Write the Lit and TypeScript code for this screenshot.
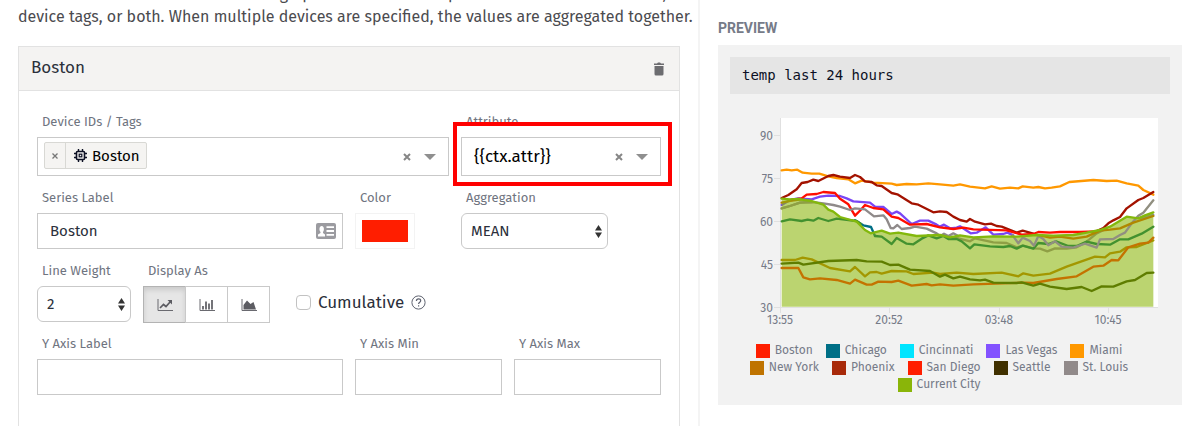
import { LitElement, html, svg, css } from "lit";
import { customElement, state } from "lit/decorators.js";

type Series = { name: string; color: string };
type Line = { color: string; points: string };

const LEGEND: Series[] = [
  { name: "Boston", color: "#ff1e00" },
  { name: "Chicago", color: "#006f86" },
  { name: "Cincinnati", color: "#00e5ff" },
  { name: "Las Vegas", color: "#8352ff" },
  { name: "Miami", color: "#ff9800" },
  { name: "New York", color: "#bf7300" },
  { name: "Phoenix", color: "#a82a0a" },
  { name: "San Diego", color: "#ff1e00" },
  { name: "Seattle", color: "#403000" },
  { name: "St. Louis", color: "#918a8a" },
  { name: "Current City", color: "#8ab509" },
];

const CURRENT =
  "125,266 150,268 175,267 215,273 250,284 265,299 280,305 300,321 350,335 375,360 392,370 425,362 450,371 475,368 530,378 600,375 630,382 660,376 700,382 760,379 830,380 890,375 940,377 1000,375 1040,368 1080,360 1110,350 1160,320 1195,325 1215,316 1240,307";

// Lines drawn beneath the Current City area.
const BACK: Line[] = [
  { color: "#006f86", points: "345,331 370,346 393,351 405,378" },
  {
    color: "#7a45f5",
    points:
      "125,285 150,270 175,265 215,268 240,260 265,257 300,258 320,265 340,274 390,278 405,290 430,291 455,312 470,305 480,310 515,342 540,332 565,332 590,344 600,350 612,344 630,355 650,353 660,349 692,370 710,368 737,352 760,374 790,372 802,368 820,376",
  },
  { color: "#8a80d0", points: "1200,325 1240,315" },
  {
    color: "#ff9800",
    points:
      "125,181 140,179 155,181 172,179 188,188 215,191 238,191 265,199 290,204 325,208 345,220 365,212 400,218 455,221 470,225 500,222 530,223 565,220 600,223 640,227 660,223 690,230 735,235 755,229 780,236 810,233 835,235 848,229 880,233 895,231 915,235 935,233 960,229 988,216 1060,210 1100,213 1130,212 1160,220 1195,227 1210,240 1240,254",
  },
  { color: "#bf7300", points: "125,278 155,272 185,268" },
  {
    color: "#a31200",
    points:
      "125,264 145,255 170,238 185,219 203,216 220,209 235,213 265,198 280,195 300,200 330,204 345,195 360,201 375,214 395,216 410,226 425,228 455,249 472,253 515,280 535,284 580,307 600,304 620,306 640,320 660,330 680,335 690,327 705,335 735,343 753,341 770,348 785,350 830,368 848,362 880,371",
  },
  {
    color: "#ff0d00",
    points:
      "155,270 185,265 200,254 230,252 250,246 285,249 300,266 325,283 345,317 362,300 375,285 400,294 430,298 455,320 475,324 510,344 560,342 600,352 640,357 670,353 700,358 800,361 845,374 880,372 895,366 930,368 960,366 1020,366 1070,364",
  },
  { color: "#a31200", points: "1060,368 1090,354 1105,340 1120,331 1140,321 1160,295 1195,270 1210,264 1240,246" },
  {
    color: "#8f8a8a",
    points:
      "125,295 150,288 180,278 215,276 250,280 280,285 300,290 330,300 345,295 375,298 402,319 430,316 440,328 452,354 460,355 472,345 485,357 510,354 525,350 560,356 590,370 600,378 612,371 625,378 640,370 655,378",
  },
];

// Lines that read through the Current City area.
const FRONT: Line[] = [
  { color: "#8f9f45", points: "125,295 150,288 180,278 215,276" },
  {
    color: "#8f9f45",
    points:
      "635,380 690,394 705,385 760,397 800,399 830,412 850,407 880,415 900,416 922,424 945,415 980,416 1010,412 1040,395 1070,370 1100,355",
  },
  {
    color: "#43912f",
    points:
      "125,334 150,328 185,333 203,329 220,332 235,324 265,333 290,326 350,333 362,341",
  },
  {
    color: "#43912f",
    points:
      "405,378 425,380 455,402 470,384 500,401 520,403 545,386 565,376 590,385 610,378 625,387 650,387 665,394 690,415 703,403 750,409 790,411 810,408 830,416 848,407 880,416 895,399 925,402 948,394 985,408 1010,408 1040,395 1070,402 1110,404 1140,388 1165,388 1205,371 1240,350",
  },
  {
    color: "#918f80",
    points:
      "818,376 835,400 848,383 870,393 882,407 895,378 910,387 925,406 945,394 965,410 1000,413 1035,401 1070,413 1080,388 1120,387 1140,375 1155,368 1175,340 1195,317 1210,308 1240,271",
  },
  { color: "#b08700", points: "890,374 930,383 960,380 1000,386 1040,380 1080,362 1110,359 1140,355 1180,338 1240,318" },
  {
    color: "#a39700",
    points:
      "125,450 165,450 188,443 215,448 270,474 330,484 345,471 375,499 390,487 410,486 425,491 455,483 500,484 520,492 580,488 600,492 650,488 700,492 785,488 835,499 850,490 880,497 930,491 980,470 1065,440 1095,442 1110,430 1140,425 1160,412 1190,411 1240,391",
  },
  {
    color: "#c47300",
    points:
      "125,474 175,474 190,502 210,508 240,505 290,510 330,521 345,509 380,524 395,524 415,515 455,516 475,512 515,527 560,522 575,526 600,523 640,527 700,523 850,518 880,519 950,507 1010,499 1060,470 1090,467 1115,450 1135,451 1165,412 1200,401 1225,398 1240,383",
  },
  {
    color: "#5f7d00",
    points:
      "125,461 175,458 190,464 265,453 350,450 380,454 425,455 450,465 475,464 510,479 570,483 600,500 615,494 640,505 660,500 690,508 720,511 735,509 760,518 830,519 845,517 880,527 900,521 930,530 980,537 1025,531 1055,543 1085,529 1120,530 1160,514 1185,510 1220,489 1240,488",
  },
];

const Y_TICKS = [
  { label: "90", y: 25 },
  { label: "75", y: 68 },
  { label: "60", y: 111 },
  { label: "45", y: 154 },
  { label: "30", y: 197 },
];

const X_TICKS = [
  { label: "13:55", x: 40 },
  { label: "20:52", x: 149 },
  { label: "03:48", x: 259 },
  { label: "10:45", x: 368 },
];

@customElement("temp-chart")
export class TempChart extends LitElement {
  static styles = css`
    :host {
      display: block;
    }
    .plot {
      display: block;
      width: 100%;
      height: auto;
    }
    .tick {
      font: 12px "Fira Sans", "Noto Sans", sans-serif;
      fill: #767b88;
    }
    .axis {
      stroke: #e0e0e0;
    }
    .line {
      fill: none;
      stroke-width: 7;
      stroke-linejoin: round;
      stroke-linecap: round;
    }
    .legend {
      display: flex;
      flex-wrap: wrap;
      justify-content: center;
      column-gap: 13px;
      margin: 0;
      padding: 0 32px 0 10px;
      list-style: none;
      font: 12px/17px "Fira Sans", "Noto Sans", sans-serif;
      color: #767b88;
    }
    .entry {
      display: flex;
      align-items: center;
      gap: 5px;
    }
    .swatch {
      width: 14px;
      height: 14px;
    }
  `;

  private line = (l: Line) =>
    svg`<polyline class="line" stroke=${l.color} points=${l.points}></polyline>`;

  render() {
    return html`
      <svg class="plot" viewBox="-10 -16 440 248" role="img" aria-label="temp last 24 hours">
        <rect x="40" y="8" width="378" height="189" fill="#fff"></rect>
        <path class="axis" d="M40.5 8V197M40 197.5H418"></path>
        ${Y_TICKS.map(
          (t) => svg`<path class="axis" d="M34 ${t.y + 0.5}h6"></path>
            <text class="tick" text-anchor="end" x="33" y=${t.y + 5}>${t.label}</text>`
        )}
        ${X_TICKS.map(
          (t) => svg`<path class="axis" d="M${t.x + 0.5} 197v6"></path>
            <text class="tick" text-anchor="middle" x=${t.x} y="214">${t.label}</text>`
        )}
        <g transform="scale(.33333)">
          ${BACK.map(this.line)}
          <polygon fill="#8ab509" fill-opacity=".58" points="${CURRENT} 1240,590 125,590"></polygon>
          ${FRONT.map(this.line)}
          ${this.line({ color: "#83b80c", points: CURRENT })}
        </g>
      </svg>
      <ul class="legend">
        ${LEGEND.map(
          (s) => html`<li class="entry">
            <span class="swatch" style="background:${s.color}"></span>${s.name}
          </li>`
        )}
      </ul>
    `;
  }
}

const clearIcon = html`<svg width="8" height="8" viewBox="0 0 8 8">
  <path d="M1 1l6 6M7 1l-6 6" stroke="#868686" stroke-width="2"></path>
</svg>`;
const caretIcon = html`<svg width="12" height="6" viewBox="0 0 12 6">
  <path d="M0 0h12L6 6z" fill="#8f8f8f"></path>
</svg>`;
const sortIcon = html`<svg class="sort" width="7" height="13" viewBox="0 0 7 13">
  <path d="M0 5.5L3.5 0 7 5.500zM0 7.500L3.500 13 7 7.500z" fill="#333"></path>
</svg>`;
const chartAxes = svg`<path d="M1 0v11.500h15" fill="none" stroke="#6a6a70"></path>`;

@customElement("app-root")
export class AppRoot extends LitElement {
  @state() private display = "line";

  static styles = css`
    :host {
      display: grid;
      grid-template-columns: 7fr 5fr;
      height: 100vh;
      overflow: hidden;
      background: #fff;
      color: #2b303b;
      font-family: "Fira Sans", "Noto Sans", sans-serif;
    }
    * {
      box-sizing: border-box;
    }
    button,
    input,
    select {
      font: inherit;
      color: inherit;
      margin: 0;
    }
    svg {
      display: block;
      flex: none;
    }
    .editor {
      display: flex;
      flex-direction: column;
      min-width: 0;
      padding: 0 18px;
      border-right: 2px solid #f4f4f4;
    }
    .intro {
      margin: -18px 0 18px;
      font-size: 16px;
      line-height: 23px;
      color: #4b4b4f;
      white-space: nowrap;
    }
    .card {
      flex: 1;
      border: solid #e2e2e2;
      border-width: 1px 1px 0;
    }
    .card-head {
      display: flex;
      align-items: center;
      justify-content: space-between;
      height: 44px;
      padding: 0 14px 0 12px;
      background: #f4f3f2;
      border-bottom: 1px solid #e2e2e2;
    }
    .card-title {
      margin: 0;
      font-size: 17px;
      line-height: 24px;
      padding-bottom: 2px;
      font-weight: 400;
    }
    .plain {
      display: flex;
      align-items: center;
      justify-content: center;
      padding: 0;
      border: 0;
      background: none;
    }
    .form {
      display: grid;
      grid-template-columns: repeat(12, 1fr);
      gap: 11px 12px;
      padding: 20px 18px;
    }
    .field {
      display: flex;
      flex-direction: column;
      align-items: stretch;
      min-width: 0;
    }
    .s2 { grid-column: span 2; }
    .s3 { grid-column: span 3; }
    .s4 { grid-column: span 4; }
    .s6 { grid-column: span 6; }
    .s8 { grid-column: span 8; }
    .first { grid-column: 1 / span 2; }
    .label {
      padding-left: 5px;
      margin-bottom: 4px;
      font-size: 13px;
      line-height: 22px;
      color: #6f7480;
      white-space: nowrap;
    }
    .control {
      position: relative;
      display: flex;
      align-items: center;
      height: 36px;
      border: 1px solid #c9c9c9;
      background: #fff;
    }
    .tall {
      height: 39px;
    }
    .entry {
      flex: 1;
      min-width: 0;
      width: 100%;
      height: 100%;
      padding: 0 12px;
      border: 0;
      outline: 0;
      background: none;
      font-size: 15px;
    }
    .combo {
      color: #000;
      font-size: 17px;
    }
    .tools {
      display: flex;
      align-items: center;
      gap: 13px;
      padding-right: 12px;
    }
    .chip {
      display: flex;
      align-items: stretch;
      height: 27px;
      margin-left: 6px;
      margin-bottom: 2px;
      border: 1px solid #d8d8d4;
      border-radius: 2px;
      background: #f5f4f2;
      color: #000;
      font-size: 15px;
    }
    .chip-x {
      width: 21px;
      border-right: 1px solid #d8d8d4;
    }
    .chip-name {
      display: flex;
      align-items: center;
      gap: 5px;
      padding: 0 6px 0 8px;
    }
    .callout {
      position: absolute;
      inset: -15px -11px -10px -8px;
      border: 4px solid #f00;
      background: #fff;
    }
    .over {
      position: relative;
    }
    .contact {
      margin-right: 6px;
    }
    .swatch {
      appearance: none;
      width: 60px;
      height: 36px;
      padding: 6px;
      border: 1px solid #f3f3f3;
      background: #fff;
    }
    .swatch::-webkit-color-swatch-wrapper {
      padding: 0;
    }
    .swatch::-webkit-color-swatch {
      border: 0;
      border-radius: 0;
    }
    .rounded {
      border-radius: 6px;
    }
    .select {
      appearance: none;
      padding: 0 9px;
    }
    .sort {
      position: absolute;
      right: 5px;
      pointer-events: none;
    }
    .display {
      display: flex;
      align-items: flex-start;
      height: 36px;
      gap: 26px;
    }
    .group {
      display: flex;
    }
    .toggle {
      width: 43px;
      height: 37px;
      padding: 0;
      display: flex;
      align-items: center;
      justify-content: center;
      border: 1px solid #c9c9c9;
      background: #fff;
    }
    .toggle + .toggle {
      margin-left: -1px;
    }
    .toggle[aria-pressed="true"] {
      background: #e6e6e6;
      border-color: #b3b3b3;
      box-shadow: inset 0 3px 5px rgba(0, 0, 0, 0.12);
    }
    .check {
      display: flex;
      align-items: center;
      gap: 7px;
      height: 33px;
      font-size: 17px;
    }
    .tick {
      appearance: none;
      width: 15px;
      height: 15px;
      border: 1px solid #c2c2c2;
      border-radius: 4px;
      background: #fff;
    }
    .preview {
      min-width: 0;
      padding: 18px 18px 0;
    }
    .preview-title {
      margin: 0 0 7px;
      font: 700 14px/20px "Liberation Sans Narrow", Roboto, sans-serif;
      color: #767b88;
    }
    .panel {
      padding: 12px;
      background: #f2f2f2;
    }
    .chart-title {
      margin: 0;
      padding: 0 12px;
      background: #e5e5e5;
      color: #0c1024;
      font: 14px/36px "DejaVu Sans Mono", monospace;
      padding-bottom: 1px;
    }
  `;

  private toggle(kind: string, label: string, shape: unknown) {
    return html`<button
      class="toggle"
      type="button"
      aria-label=${label}
      aria-pressed=${this.display === kind}
      @click=${() => (this.display = kind)}
    >
      <svg width="16" height="12" viewBox="0 0 16 12">${chartAxes}${shape}</svg>
    </button>`;
  }

  render() {
    return html`
      <main class="editor">
        <p class="intro">
          Select the devices and attributes to graph. Devices can be specified as a list of device IDs,<br />
          device tags, or both. When multiple devices are specified, the values are aggregated together.
        </p>
        <section class="card">
          <header class="card-head">
            <h2 class="card-title">Boston</h2>
            <button class="plain" type="button" aria-label="Remove series">
              <svg width="12" height="14" viewBox="0 0 12 14">
                <path d="M1 1.500h3L5 .5h2l1 1h3V3H1zM1.500 4h9v8a1.500 1.500 0 0 1-1.500 1.500H3A1.500 1.500 0 0 1 1.500 12z" fill="#6c6c70"></path>
              </svg>
            </button>
          </header>
          <form class="form">
            <div class="field s8">
              <label class="label" for="devices">Device IDs / Tags</label>
              <div class="control tall">
                <span class="chip">
                  <button class="plain chip-x" type="button" aria-label="Remove Boston">
                    <svg width="6" height="6" viewBox="0 0 6 6">
                      <path d="M.5.5l5 5M5.500.5l-5 5" stroke="#777" stroke-width="1.300"></path>
                    </svg>
                  </button>
                  <span class="chip-name">
                    <svg width="13" height="13" viewBox="0 0 13 13" fill="none" stroke="#0c1024">
                      <rect x="2.500" y="2.500" width="8" height="8" rx="1" stroke-width="1.600"></rect>
                      <path d="M4.500 0v2M8.500 0v2M4.500 11v2M8.500 11v2M0 4.500h2M0 8.500h2M11 4.500h2M11 8.500h2" stroke-width="1.400"></path>
                      <rect x="5.200" y="5.200" width="2.600" height="2.600" stroke-width="1.200"></rect>
                    </svg>
                    Boston
                  </span>
                </span>
                <input class="entry" id="devices" type="text" />
                <span class="tools">
                  <button class="plain" type="button" aria-label="Clear devices">${clearIcon}</button>
                  <button class="plain" type="button" aria-label="Open devices">${caretIcon}</button>
                </span>
              </div>
            </div>
            <div class="field s4">
              <label class="label" for="attribute">Attribute</label>
              <div class="over">
                <div class="callout"></div>
                <div class="control tall">
                  <input class="entry combo" id="attribute" type="text" value="{{ctx.attr}}" />
                  <span class="tools">
                    <button class="plain" type="button" aria-label="Clear attribute">${clearIcon}</button>
                    <button class="plain" type="button" aria-label="Open attributes">${caretIcon}</button>
                  </span>
                </div>
              </div>
            </div>

            <div class="field s6">
              <label class="label" for="series">Series Label</label>
              <div class="control">
                <input class="entry" id="series" type="text" value="Boston" />
                <svg class="contact" width="20" height="16" viewBox="0 0 20 16">
                  <rect width="20" height="16" rx="2" fill="#9b9ba0"></rect>
                  <path d="M2 13.500V11.500l2.500-1.500V9C3 7.500 3 3 5.700 3S8.400 7.500 7 9v1l2 1.500v2z" fill="#fff"></path>
                  <path d="M10.500 4.200h7.500M10.500 8h7.500M10.500 11.800h7.500" stroke="#fff" stroke-width="1.800"></path>
                </svg>
              </div>
            </div>
            <div class="field s2">
              <label class="label" for="color">Color</label>
              <input class="swatch" id="color" type="color" value="#ff1e00" />
            </div>
            <div class="field s3">
              <label class="label" for="aggregation">Aggregation</label>
              <div class="control rounded">
                <select class="entry select" id="aggregation">
                  <option>MEAN</option>
                </select>
                ${sortIcon}
              </div>
            </div>

            <div class="field first">
              <label class="label" for="weight">Line Weight</label>
              <div class="control rounded">
                <select class="entry select" id="weight">
                  <option>2</option>
                </select>
                ${sortIcon}
              </div>
            </div>
            <div class="field s8">
              <span class="label" id="display-as">Display As</span>
              <div class="display">
                <div class="group" role="group" aria-labelledby="display-as">
                  ${this.toggle(
                    "line",
                    "Line",
                    svg`<path d="M3 9l3.500-3.500L9 7.500l4.500-5" fill="none" stroke="#5c5c62" stroke-width="1.700"></path><path d="M10.500 1H15v4.500z" fill="#5c5c62"></path>`
                  )}
                  ${this.toggle(
                    "bar",
                    "Bar",
                    svg`<path d="M4 10.500V7M7 10.500V2.500M10 10.500V4.500M13 10.500V1" fill="none" stroke="#5c5c62" stroke-width="1.700"></path>`
                  )}
                  ${this.toggle(
                    "area",
                    "Area",
                    svg`<path d="M2.500 10.500V6L6 1.500 9.500 5 12.500 3 15 10.500z" fill="#5c5c62"></path>`
                  )}
                </div>
                <label class="check">
                  <input class="tick" type="checkbox" />
                  Cumulative
                  <svg width="15" height="15" viewBox="0 0 15 15" fill="none" stroke="#5f6370">
                    <circle cx="7.500" cy="7.500" r="6.600"></circle>
                    <path d="M5.400 6c0-3 4.300-2.700 4.300-.3 0 1.600-2.100 1.500-2.100 3.300M7.600 10.200v1.400" stroke-width="1.200"></path>
                  </svg>
                </label>
              </div>
            </div>

            <div class="field s6">
              <label class="label" for="y-label">Y Axis Label</label>
              <div class="control"><input class="entry" id="y-label" type="text" /></div>
            </div>
            <div class="field s3">
              <label class="label" for="y-min">Y Axis Min</label>
              <div class="control"><input class="entry" id="y-min" type="text" /></div>
            </div>
            <div class="field s3">
              <label class="label" for="y-max">Y Axis Max</label>
              <div class="control"><input class="entry" id="y-max" type="text" /></div>
            </div>
          </form>
        </section>
      </main>
      <aside class="preview">
        <h2 class="preview-title">PREVIEW</h2>
        <div class="panel">
          <h3 class="chart-title">temp last 24 hours</h3>
          <temp-chart></temp-chart>
        </div>
      </aside>
    `;
  }
}
